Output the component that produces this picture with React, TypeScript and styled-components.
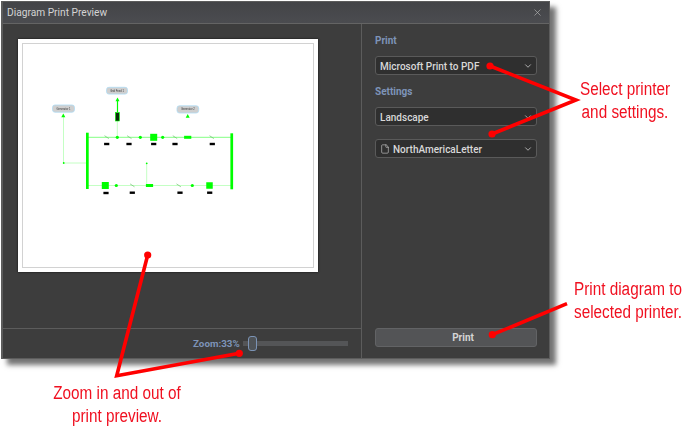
import React from "react";
import styled, { createGlobalStyle } from "styled-components";
import { ChevronDown, File, X } from "lucide-react";

const Global = createGlobalStyle`
  html, body { margin: 0; padding: 0; background: #fff; }
  body { font-family: Roboto, "Liberation Sans", sans-serif; }
`;
const Stage = styled.div`
  position: relative; width: 688px; height: 436px; overflow: hidden; background: #fff; padding: 1px 0 0 1px; box-sizing: border-box;
`;
const Win = styled.div`
  width: 549px; height: 358px; box-sizing: border-box; display: flex; flex-direction: column;
  background: #3d3d3d; border: 1px solid #5c5c5c; border-left-width: 2px; box-shadow: 6px 6px 5px rgba(0,0,0,.55);
`;
const TitleBar = styled.div`
  height: 22px; flex: none; display: flex; align-items: center; justify-content: space-between; box-sizing: border-box;
  padding: 0 6px 0 4px; background: linear-gradient(#434447, #4b4c50); border-bottom: 1px solid #646464;
  color: #d4d4d4; font-size: 10.2px;
`;
const Close = styled.span`display: flex; color: #b5b5b5;`;
const Body = styled.div`flex: 1; display: flex; min-height: 0;`;
const Left = styled.div`width: 358px; flex: none; display: flex; flex-direction: column; border-right: 1px solid #5c5c5c; box-sizing: content-box;`;
const PreviewArea = styled.div`flex: 1; padding: 15px 0 0 15px;`;
const Page = styled.div`
  width: 300px; height: 233px; box-sizing: border-box; background: #fff; padding: 4px; box-shadow: 0 0 2px rgba(0,0,0,.8);
`;
const PageInner = styled.div`height: 100%; box-sizing: border-box; border: 1px solid #d2d2d2; display: flex;`;
const DiagramSvg = styled.svg`display: block; width: 100%; height: 100%; filter: blur(.45px);`;
const StatusBar = styled.div`
  height: 30px; flex: none; box-sizing: border-box; border-top: 1px solid #5c5c5c; display: flex; align-items: center; padding: 0 0 0 190px; gap: 3px;
`;
const ZoomLabel = styled.span`color: #7e94b8; font-size: 9.8px; font-weight: 700; white-space: nowrap;`;
const Track = styled.div`
  position: relative; width: 105px; height: 5px; background: #545557; display: block;
`;
const Thumb = styled.div`
  position: absolute; left: 5px; top: -5px; width: 9px; height: 15px; box-sizing: border-box; border: 1px solid #7b93b5; border-radius: 3px; background: #4f5357;
`;
const Right = styled.div`flex: 1; padding: 10px 12px 11px 13px; display: flex; flex-direction: column; min-width: 0;`;
const SectionLabel = styled.div<{ $mt: number }>`
  margin-top: ${p => p.$mt}px; color: #7e94b8; font-size: 10px; font-weight: 700; line-height: 14px; height: 14px;
`;
const Select = styled.div<{ $mt: number }>`
  margin-top: ${p => p.$mt}px; height: 19px; flex: none; box-sizing: border-box; display: flex; align-items: center; justify-content: space-between;
  padding: 0 3px 0 4px; background: #2f2f2f; border: 1px solid #5a5a5a; border-radius: 3px; color: #d8d8d8; font-size: 10px; font-weight: 500;
`;
const SelectValue = styled.span`display: flex; align-items: center; gap: 3px; white-space: nowrap; padding-top: 1px;`;
const Chevron = styled.span`display: flex; color: #c4c4c4;`;
const PrintButton = styled.div`
  margin-top: auto; height: 19px; flex: none; box-sizing: border-box; display: flex; align-items: center; justify-content: center;
  padding-left: 14px; background: #535456; border: 1px solid #626365; border-radius: 3px; color: #d5d5d5; font-size: 10px; font-weight: 700;
`;
const Overlay = styled.svg`position: absolute; left: 0; top: 0; width: 688px; height: 436px; pointer-events: none;`;
const Callout = styled.div<{ $x: number; $y: number; $w: number }>`
  position: absolute; left: ${p => p.$x}px; top: ${p => p.$y}px; width: ${p => p.$w}px; text-align: center; color: #f01020;
  font-family: "Liberation Sans", sans-serif; font-size: 18px; line-height: 22.5px; white-space: nowrap;
  transform: scaleX(.85);
`;

const G = "#00ff00";
const L = "#c4ffc4";
const pills = [
  { x: 52.5, y: 105, w: 22, h: 7.2, t: "Generator 1" },
  { x: 106.5, y: 87.3, w: 21, h: 6.8, t: "Grid Feed 1" },
  { x: 177, y: 105.8, w: 21.7, h: 7.2, t: "Generator 2" },
];
const tris = [[63.3, 115.5], [117.5, 99.5], [187.7, 116]];
const squares = [[153.7, 137.3, 7], [105.3, 185.5, 7], [209.5, 185.5, 6.5]];
const bars = [[187.7, 137.3], [149.5, 185.5]];
const dots = [[117.3, 137.3], [140.3, 137.3], [162.7, 137.3], [116.3, 185.5], [192.3, 185.5]];
const switches = [[106.7, 137.3], [129.3, 137.3], [175, 137.3], [211.7, 137.3], [132.3, 185.5], [178.7, 185.5]];
const tags = [[106.7, 144], [129, 144], [153.7, 144], [175, 144], [212.3, 144], [106, 193], [132.3, 192.7], [180, 192.7], [209.7, 192.7]];

function Diagram() {
  return (
    <DiagramSvg viewBox="23 44 290 223" preserveAspectRatio="none">
      <line x1="88" y1="137.3" x2="231" y2="137.3" stroke={G} strokeWidth=".7" opacity=".7" />
      <line x1="88" y1="185.5" x2="231" y2="185.5" stroke={L} strokeWidth="1.2" />
      <path d="M63.5 116V163H87M117.3 121V137M146.7 163V185" fill="none" stroke={L} strokeWidth="1" />
      <rect x="86" y="132.7" width="2.7" height="56.3" fill={G} />
      <rect x="230.4" y="133.3" width="2.7" height="56" fill={G} />
      <line x1="117.5" y1="100" x2="117.5" y2="112" stroke={G} strokeWidth="1.2" />
      <rect x="115.4" y="112.5" width="4" height="8.5" fill="#0a2a0a" stroke={G} strokeWidth=".6" />
      {pills.map(p => (
        <g key={p.t}>
          <rect x={p.x} y={p.y} width={p.w} height={p.h} rx="2.4" fill="#cfcfcf" stroke="#aedcf5" strokeWidth=".8" />
          <text x={p.x + p.w / 2} y={p.y + p.h / 2 + .9} fontSize="2.6" textAnchor="middle" fill="#333" fontFamily="Liberation Sans">{p.t}</text>
        </g>
      ))}
      {tris.map(([x, y]) => <path key={x} d={`M${x - 2} ${y + 1.7}L${x} ${y - 1.9}L${x + 2} ${y + 1.7}Z`} fill={G} />)}
      {squares.map(([x, y, s]) => <rect key={x} x={x - s / 2} y={y - s / 2} width={s} height={s} fill={G} />)}
      {bars.map(([x, y]) => <rect key={x} x={x - 3.6} y={y - 1.5} width="7.2" height="3" fill={G} />)}
      {dots.map(([x, y]) => <circle key={x + y} cx={x} cy={y} r="1.6" fill={G} />)}
      {switches.map(([x, y]) => <line key={x + y} x1={x - 2.2} y1={y - 1.6} x2={x + 2.2} y2={y + 1.3} stroke="#6fbf6f" strokeWidth=".7" />)}
      {tags.map(([x, y]) => <rect key={x + y} x={x - 2.6} y={y - 1.2} width="5.2" height="2.4" fill="#000" />)}
      <circle cx="63.7" cy="163" r=".9" fill={G} />
      <circle cx="146.7" cy="163.3" r=".9" fill={G} />
    </DiagramSvg>
  );
}

const RED = "#ff0000";

export default function App() {
  return (
    <Stage>
      <Global />
      <Win>
        <TitleBar>
          Diagram Print Preview
          <Close><X size={11} strokeWidth={1.4} /></Close>
        </TitleBar>
        <Body>
          <Left>
            <PreviewArea>
              <Page><PageInner><Diagram /></PageInner></Page>
            </PreviewArea>
            <StatusBar>
              <ZoomLabel>Zoom:33%</ZoomLabel>
              <Track><Thumb /></Track>
            </StatusBar>
          </Left>
          <Right>
            <SectionLabel $mt={0}>Print</SectionLabel>
            <Select $mt={8}>
              <SelectValue>Microsoft Print to PDF</SelectValue>
              <Chevron><ChevronDown size={10} strokeWidth={2} /></Chevron>
            </Select>
            <SectionLabel $mt={10}>Settings</SectionLabel>
            <Select $mt={8}>
              <SelectValue>Landscape</SelectValue>
              <Chevron><ChevronDown size={10} strokeWidth={2} /></Chevron>
            </Select>
            <Select $mt={13}>
              <SelectValue><File size={10} strokeWidth={1.4} />NorthAmericaLetter</SelectValue>
              <Chevron><ChevronDown size={10} strokeWidth={2} /></Chevron>
            </Select>
            <PrintButton>Print</PrintButton>
          </Right>
        </Body>
      </Win>
      <Overlay viewBox="0 0 688 436">
        <g fill="none" stroke={RED} strokeWidth="3.6" strokeLinejoin="miter">
          <path d="M490 66L576 100L492 134" />
          <path d="M492.3 334.7L567 303.7" />
          <path d="M147.7 255L116.7 375.7L239.3 353.3" />
        </g>
        <g fill={RED}>
          <circle cx="490" cy="66" r="3.6" />
          <circle cx="492" cy="134" r="3.6" />
          <circle cx="492.3" cy="334.7" r="3.6" />
          <circle cx="147.7" cy="255" r="3.6" />
          <circle cx="239.3" cy="353.3" r="3.6" />
        </g>
      </Overlay>
      <Callout $x={565} $y={78} $w={120}>Select printer<br />and settings.</Callout>
      <Callout $x={565} $y={278} $w={120}>Print diagram to<br />selected printer.</Callout>
      <Callout $x={37} $y={382} $w={160}>Zoom in and out of<br />print preview.</Callout>
    </Stage>
  );
}
